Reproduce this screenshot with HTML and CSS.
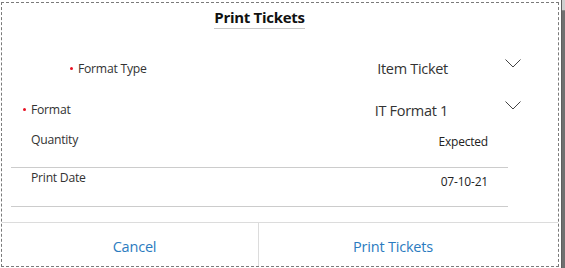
FILE: index.html
```html
<!DOCTYPE html>
<html lang="en">
<head>
<meta charset="utf-8">
<title>Print Tickets</title>
<link rel="stylesheet" href="styles.css">
</head>
<body>
<div class="page">
  <div class="dialog">
    <header class="title-wrap">
      <h1 class="title">Print Tickets</h1>
    </header>
    <div class="row row-select row-type">
      <span class="label"><span class="req"></span>Format Type</span>
      <span class="value">Item Ticket</span>
      <svg class="chevron" viewBox="0 0 16 9" width="16" height="9" aria-hidden="true"><path d="M0.5 0.5 L8 8 L15.5 0.5" fill="none" stroke="#444" stroke-width="1"/></svg>
    </div>
    <div class="row row-select row-format">
      <span class="label"><span class="req"></span>Format</span>
      <span class="value">IT Format 1</span>
      <svg class="chevron" viewBox="0 0 16 9" width="16" height="9" aria-hidden="true"><path d="M0.5 0.5 L8 8 L15.5 0.5" fill="none" stroke="#444" stroke-width="1"/></svg>
    </div>
    <div class="row row-info row-qty">
      <span class="label">Quantity</span>
      <span class="info-value">Expected</span>
    </div>
    <div class="row row-info row-date">
      <span class="label">Print Date</span>
      <span class="info-value">07-10-21</span>
    </div>
    <footer class="actions">
      <button class="action action-cancel" type="button">Cancel</button>
      <button class="action action-print" type="button">Print Tickets</button>
    </footer>
  </div>
  <div class="side"><div class="side-top"></div></div>
</div>
</body>
</html>
```

FILE: styles.css
```css
html, body {
  margin: 0;
  padding: 0;
  background: #ffffff;
}
body {
  font-family: "Open Sans", "Noto Sans", sans-serif;
  color: #333333;
  width: 565px;
  height: 268px;
  overflow: hidden;
}
.page {
  display: flex;
  padding: 2px 0 0 1px;
  height: 266px;
  box-sizing: border-box;
}
.dialog {
  width: 558px;
  height: 265px;
  box-sizing: border-box;
  border: 1px dashed #7a7a7a;
  display: flex;
  flex-direction: column;
  background: #fff;
}
.side {
  flex: 1;
  margin-left: 2px;
  margin-top: -2px;
  height: 268px;
  background: #707070;
  border-left: 1px solid #5e5e5e;
}
.side-top {
  height: 10px;
  background: #cfcfcf;
  border-bottom: 1px solid #8a8a8a;
}
.title-wrap {
  height: 26px;
  display: flex;
  justify-content: center;
  margin: 0 50px 0 9px;
}
.title {
  margin: 0;
  font-size: 15px;
  font-weight: 700;
  color: #111;
  line-height: 20px;
  padding-top: 4px;
  height: 21px;
  border-bottom: 1px solid #c8c8c8;
  letter-spacing: -0.3px;
}
.row {
  display: flex;
  box-sizing: border-box;
}
.label {
  font-size: 12.2px;
  line-height: 18px;
  color: #333;
  display: flex;
  align-items: center;
  letter-spacing: -0.25px;
}
.req {
  width: 3px;
  height: 3px;
  border-radius: 50%;
  background: #e81123;
  margin-right: 5px;
  margin-top: -1px;
}
.row-select {
  height: 42px;
  align-items: center;
  margin: 0 37px 0 9px;
}
.row-type {
  margin-top: 18px;
  padding-left: 59px;
}
.row-type .label { margin-top: 2px; }
.row-format {
  padding-left: 12px;
}
.value {
  margin-left: auto;
  font-size: 14.5px;
  color: #333;
  letter-spacing: -0.3px;
}
.chevron {
  margin-left: 57px;
  margin-top: -10px;
  flex: none;
}
.row-info {
  margin: 0 50px 0 9px;
  padding: 0 20px;
  border-bottom: 1px solid #cccccc;
  align-items: flex-start;
}
.row-qty {
  height: 37px;
}
.row-date {
  height: 39px;
  padding-top: 1px;
}
.info-value {
  margin-left: auto;
  font-size: 12px;
  line-height: 18px;
  color: #222;
  letter-spacing: -0.2px;
}
.row-qty .info-value { margin-top: 2px; }
.row-date .info-value { margin-top: 4px; }
.actions {
  margin-top: 15px;
  border-top: 1px solid #dcdcdc;
  display: flex;
  flex: 1;
}
.action {
  border: 0;
  background: none;
  font-family: inherit;
  font-size: 14.5px;
  color: #2b7bc0;
  cursor: pointer;
  padding: 3px 0 0;
  letter-spacing: -0.2px;
}
.action-cancel {
  width: 257px;
  padding-left: 9px;
  border-right: 1px solid #dcdcdc;
}
.action-print {
  flex: 1;
  padding-right: 31px;
}
```
